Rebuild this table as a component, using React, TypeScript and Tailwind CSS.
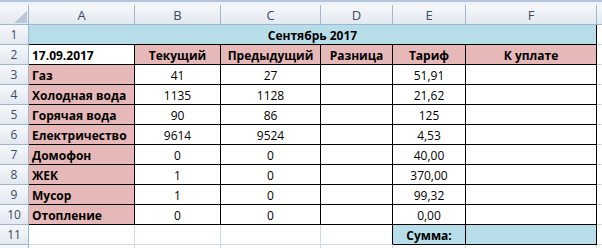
import React from 'react';

const widths = ['w-[106px]', 'w-[86px]', 'w-[100px]', 'w-[72px]', 'w-[73px]', 'w-[131px]'];
const letters = ['A', 'B', 'C', 'D', 'E', 'F'];

const rows: [string, string, string, string, string][] = [
  ['Газ', '41', '27', '', '51,91'],
  ['Холодная вода', '1135', '1128', '', '21,62'],
  ['Горячая вода', '90', '86', '', '125'],
  ['Електричество', '9614', '9524', '', '4,53'],
  ['Домофон', '0', '0', '', '40,00'],
  ['ЖЕК', '1', '0', '', '370,00'],
  ['Мусор', '1', '0', '', '99,32'],
  ['Отопление', '0', '0', '', '0,00'],
];

const RowHead = ({ n }: { n?: number }) => (
  <div className="w-[29px] h-full shrink-0 flex items-center justify-center pt-px bg-gradient-to-b from-[#f6f8fb] to-[#e2e8f0] border-r border-b border-[#9eb6ce] text-[12px] text-[#3b4b63]">
    {n}
  </div>
);

const Filler = () => <div className="flex-1 h-full border-b border-[#d0d7e5]" />;

const App: React.FC = () => {
  return (
    <div className="w-[602px] h-[248px] overflow-hidden bg-white font-['Open_Sans',sans-serif] text-[12px] text-black leading-none">
      {/* top strip */}
      <div className="h-[5px] bg-[#eef1f5] border-t-2 border-[#b7c7db]" />

      {/* column headers */}
      <div className="flex h-[20px]">
        <div className="relative w-[29px] shrink-0 bg-gradient-to-b from-[#f6f8fb] to-[#e2e8f0] border-r border-b border-[#9eb6ce]">
          <svg className="absolute left-[14px] top-[6px]" width="13" height="12" viewBox="0 0 13 12">
            <polygon points="13,0 13,12 0,12" fill="#b9c8db" />
          </svg>
        </div>
        {letters.map((l, i) => (
          <div
            key={l}
            className={`${widths[i]} shrink-0 flex items-center justify-center pt-px bg-gradient-to-b from-[#f6f8fb] to-[#e2e8f0] border-r border-b border-[#9eb6ce] text-[13px] text-[#3b4b63]`}
          >
            {l}
          </div>
        ))}
        <div className="flex-1 bg-gradient-to-b from-[#f6f8fb] to-[#e2e8f0] border-b border-[#9eb6ce]" />
      </div>

      {/* row 1 */}
      <div className="flex h-[20px]">
        <RowHead n={1} />
        <div className="w-[568px] shrink-0 h-full flex items-center justify-center pt-[2px] bg-[#b7dde8] border-r border-b border-black font-bold">
          Сентябрь 2017
        </div>
        <Filler />
      </div>

      {/* row 2 */}
      <div className="flex h-[20px]">
        <RowHead n={2} />
        <div className="w-[106px] shrink-0 h-full flex items-center pl-[3px] pt-[2px] bg-white border-r border-b border-black font-bold">
          17.09.2017
        </div>
        {['Текущий', 'Предыдущий', 'Разница', 'Тариф', 'К уплате'].map((t, i) => (
          <div
            key={t}
            className={`${widths[i + 1]} shrink-0 h-full flex items-center justify-center pt-[2px] bg-[#e6b8b7] border-r border-b border-black font-bold`}
          >
            {t}
          </div>
        ))}
        <Filler />
      </div>

      {/* data rows */}
      {rows.map((r, ri) => (
        <div key={ri} className="flex h-[20px]">
          <RowHead n={ri + 3} />
          <div className="w-[106px] shrink-0 h-full flex items-center pl-[3px] pt-[2px] bg-[#e6b8b7] border-r border-b border-black font-bold">
            {r[0]}
          </div>
          {r.slice(1).map((v, ci) => (
            <div
              key={ci}
              className={`${widths[ci + 1]} shrink-0 h-full flex items-center justify-center pt-[2px] bg-white border-r border-b border-black`}
            >
              {v}
            </div>
          ))}
          <div className="w-[131px] shrink-0 h-full bg-white border-r border-b border-black" />
          <Filler />
        </div>
      ))}

      {/* row 11 */}
      <div className="flex h-[20px]">
        <RowHead n={11} />
        <div className="w-[106px] shrink-0 h-full border-r border-b border-[#d0d7e5]" />
        <div className="w-[86px] shrink-0 h-full border-r border-b border-[#d0d7e5]" />
        <div className="w-[100px] shrink-0 h-full border-r border-b border-[#d0d7e5]" />
        <div className="w-[72px] shrink-0 h-full border-r border-b border-r-black border-b-[#d0d7e5]" />
        <div className="w-[73px] shrink-0 h-full flex items-center justify-center pt-[2px] bg-[#b7dde8] border-r border-b border-black font-bold">
          Сумма:
        </div>
        <div className="w-[131px] shrink-0 h-full bg-[#b7dde8] border-r border-b border-black" />
        <Filler />
      </div>

      {/* row 12 (cut off) */}
      <div className="flex h-[20px]">
        <RowHead />
        {widths.map((w, i) => (
          <div key={i} className={`${w} shrink-0 h-full border-r border-b border-[#d0d7e5]`} />
        ))}
        <Filler />
      </div>
    </div>
  );
};

export default App;
